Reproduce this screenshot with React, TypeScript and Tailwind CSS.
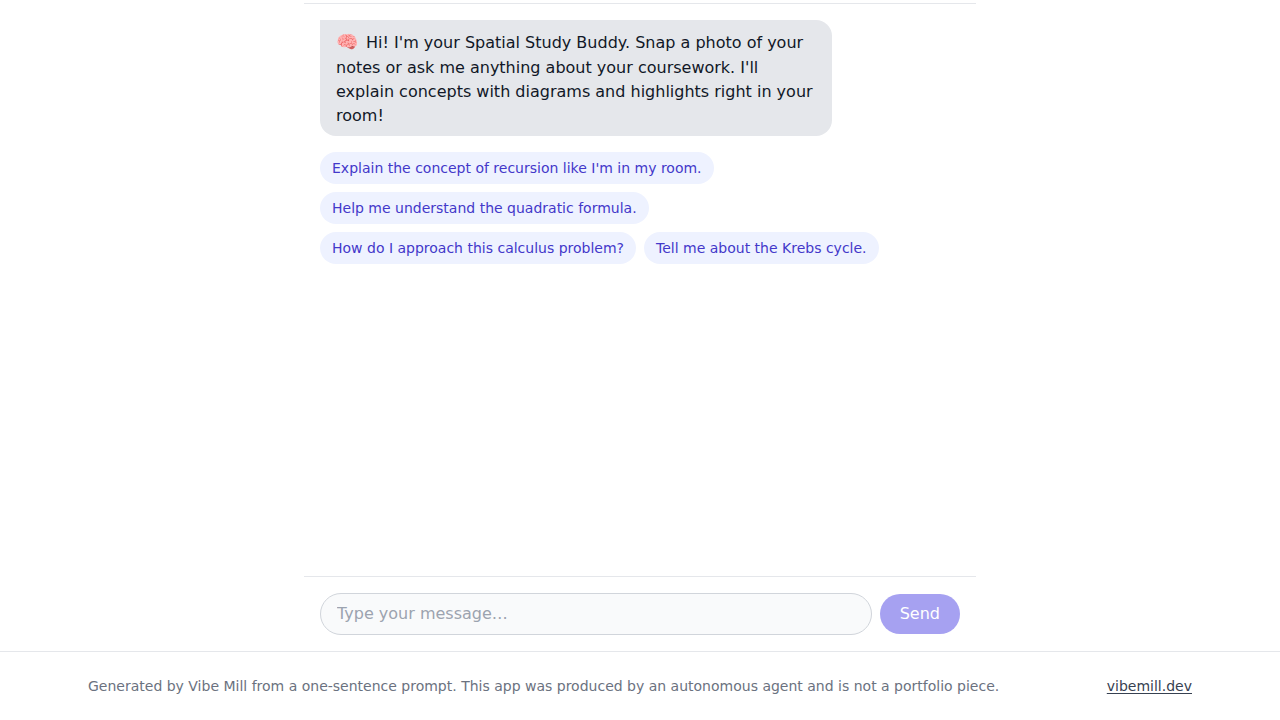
import { useState } from 'react';

const suggestions = [
  "Explain the concept of recursion like I'm in my room.",
  'Help me understand the quadratic formula.',
  'How do I approach this calculus problem?',
  'Tell me about the Krebs cycle.',
];

const App = () => {
  const [input, setInput] = useState('');

  return (
    <div className="min-h-screen flex flex-col bg-white font-['DejaVu_Sans',sans-serif]">
      <main className="flex-1 flex flex-col w-full max-w-2xl mx-auto pt-[3px]">
        <div className="flex-1 border-t border-[#e5e7eb] p-4 space-y-4">
          <div className="max-w-[80%] rounded-2xl rounded-tl-none bg-[#e5e7eb] text-[#111827] px-4 py-2">
            <p>
              <span className="text-lg mr-[3px]">🧠</span> Hi! I'm your Spatial Study Buddy. Snap a photo of your notes or ask me anything about your coursework. I'll explain concepts with diagrams and highlights right in your room!
            </p>
          </div>
          <div className="flex flex-wrap gap-2">
            {suggestions.map((s) => (
              <button
                key={s}
                type="button"
                onClick={() => setInput(s)}
                className="bg-[#eef2ff] text-[#4338ca] text-sm px-3 py-1.5 rounded-full"
              >
                {s}
              </button>
            ))}
          </div>
        </div>

        <form onSubmit={(e) => e.preventDefault()} className="flex items-center gap-2 border-t border-[#e5e7eb] p-4">
          <input
            type="text"
            aria-label="Message"
            placeholder="Type your message…"
            value={input}
            onChange={(e) => setInput(e.target.value)}
            className="flex-1 min-w-0 border border-[#d1d5db] bg-[#f9fafb] rounded-full px-4 py-2 placeholder:text-[#9ca3af]"
          />
          <button
            type="submit"
            disabled={!input.trim()}
            className="bg-[#4f46e5] text-white px-5 py-2 rounded-full disabled:opacity-50"
          >
            Send
          </button>
        </form>
      </main>

      <footer className="border-t border-[#e5e7eb] py-6 px-4">
        <div className="max-w-6xl mx-auto px-6 flex items-center justify-between text-sm text-[#6b7280]">
          <p>Generated by Vibe Mill from a one-sentence prompt. This app was produced by an autonomous agent and is not a portfolio piece.</p>
          <a href="https://vibemill.dev" className="text-[#374151] underline underline-offset-2">vibemill.dev</a>
        </div>
      </footer>
    </div>
  );
};

export default App;
